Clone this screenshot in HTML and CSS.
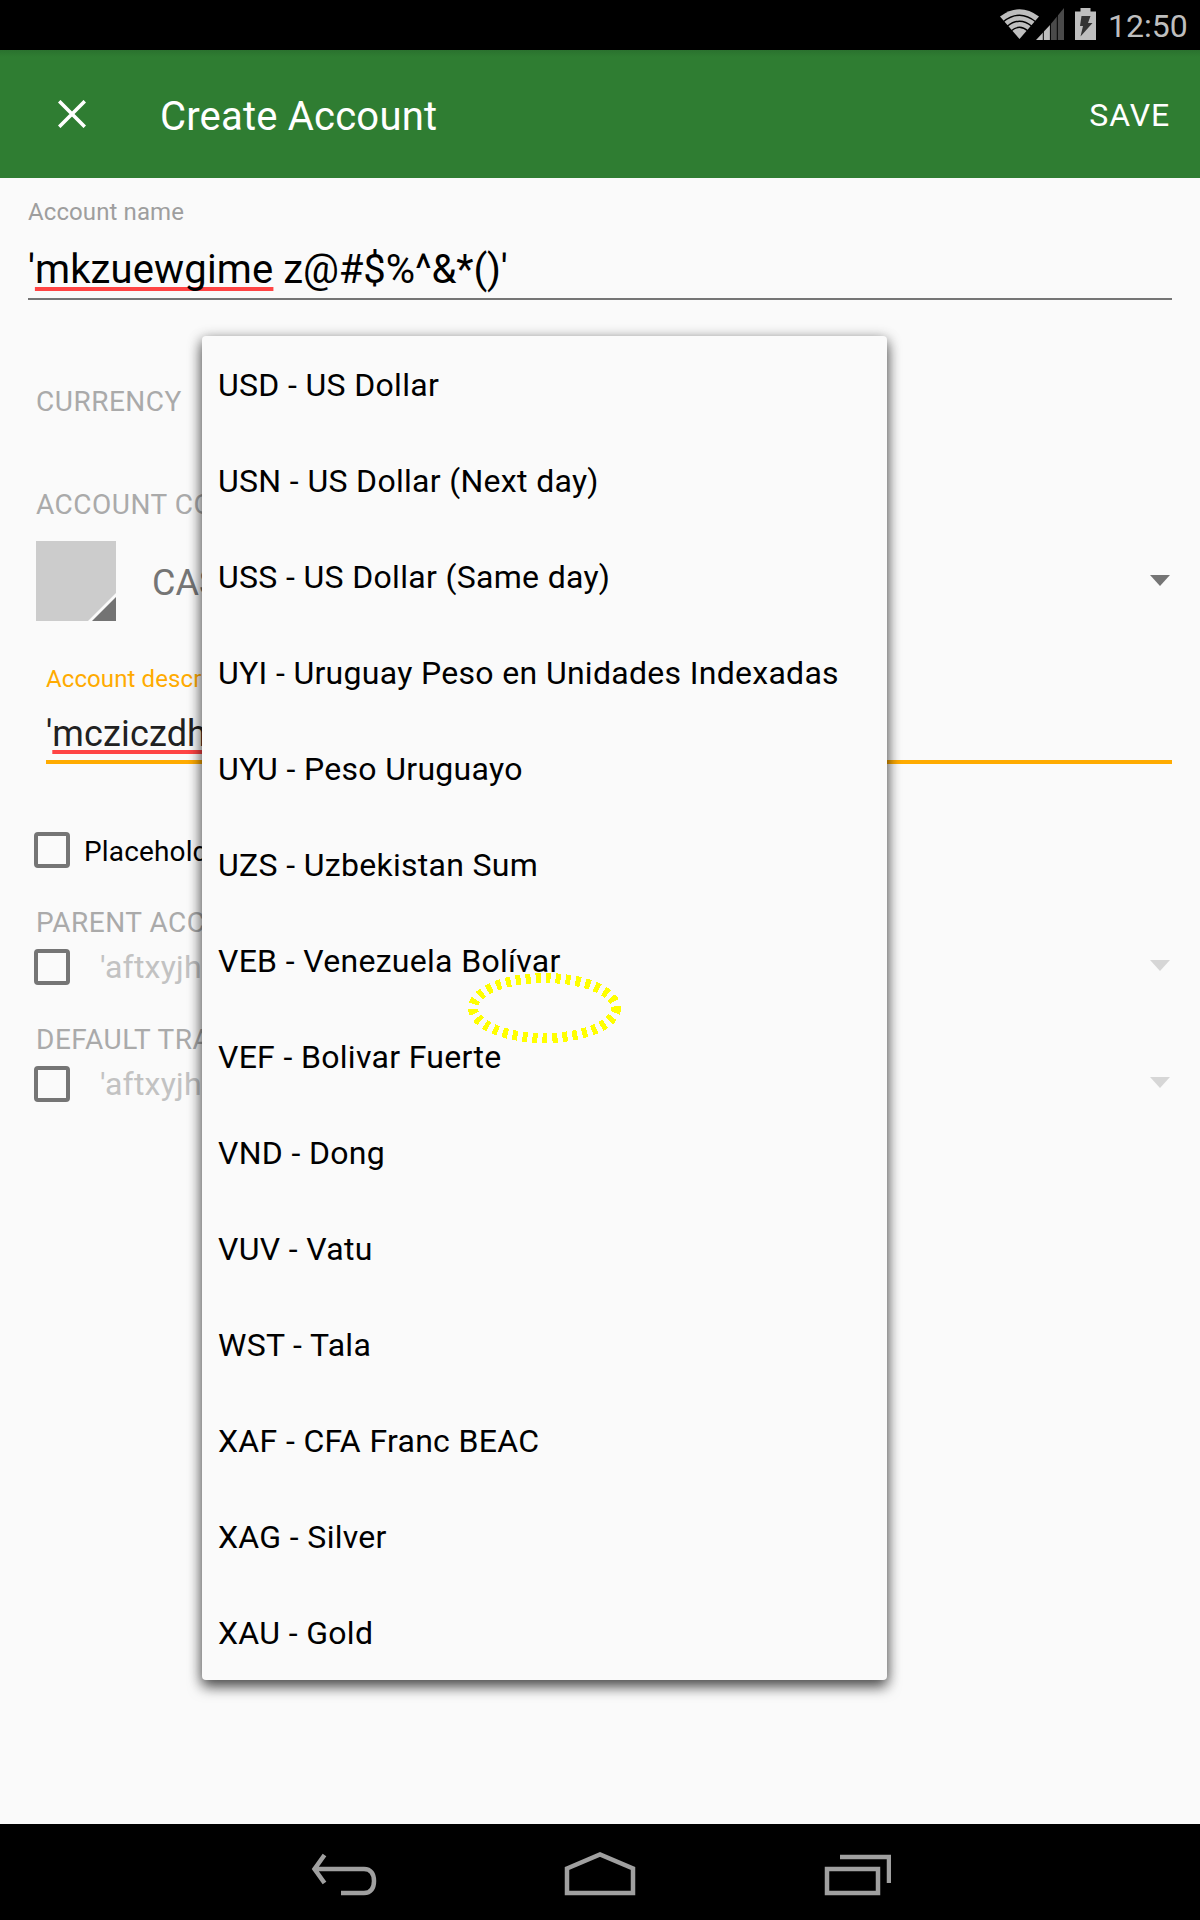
FILE: index.html
```html
<!DOCTYPE html>
<html lang="en">
<head>
<meta charset="utf-8">
<title>Create Account</title>
<link rel="stylesheet" href="styles.css">
</head>
<body>
<div class="screen">
  <div class="status-bar">
    <svg class="status-icons" width="104" height="50" viewBox="0 0 104 50">
      <path d="M4 16.500Q23.500 2 43 16.500L23.500 39Z" fill="#bebebe"/>
      <g fill="none" stroke="#000" stroke-width="1.400">
        <path d="M7 22Q23.500 8.500 40 22M11 26.500Q23.500 16 36 26.500M15 31Q23.500 23.500 32 31"/>
      </g>
      <path d="M40 40L54 25V40Z" fill="#bebebe"/>
      <path d="M54 25L68 8V40H54Z" fill="#4a4a4a"/>
      <path d="M47.300 10V40M54.400 10V40M61.300 10V40" stroke="#000" stroke-width="1"/>
      <path d="M79 11.500H84.500V8H94.500V11.500H100V40H79Z" fill="#bebebe"/>
      <path d="M85.500 16H94.500L92 23H96.500L84.500 36.500L87 26H84Z" fill="#333"/>
    </svg>
    <span class="clock">12:50</span>
  </div>

  <header class="app-bar">
    <svg class="close" width="28" height="28" viewBox="0 0 28 28"><path d="M1.200 1.200L26.800 26.800M26.800 1.200L1.200 26.800" stroke="#fff" stroke-width="3.600"/></svg>
    <h1 class="title">Create Account</h1>
    <span class="save">SAVE</span>
  </header>

  <main class="form">
    <div class="hint">Account name</div>
    <div class="field name">'<span class="typo">mkzuewgime</span> z@#$%^&amp;*()'</div>

    <div class="section currency">CURRENCY</div>
    <div class="section color-label">ACCOUNT COLOR</div>
    <div class="color-row">
      <svg width="80" height="80" viewBox="0 0 80 80"><path d="M0 0H80V80H0Z" fill="#ccc"/><path d="M52 80L80 52V80Z" fill="#fafafa"/><path d="M56 80L80 56V80Z" fill="#737373"/></svg>
      <span class="type">CASH</span>
      <svg class="arrow" width="20" height="11" viewBox="0 0 20 11"><path d="M0 0H20L10 11Z"/></svg>
    </div>

    <div class="description">
      <div class="hint accent">Account description</div>
      <div class="field active">'<span class="typo">mcziczdh</span></div>
    </div>

    <div class="check-row placeholder"><span class="box"></span><span class="check-text">Placeholder account</span></div>

    <div class="section gap">PARENT ACCOUNT</div>
    <div class="check-row disabled"><span class="box"></span><span class="account">'aftxyjh</span><svg class="arrow" width="20" height="11" viewBox="0 0 20 11"><path d="M0 0H20L10 11Z"/></svg></div>

    <div class="section gap">DEFAULT TRANSFER ACCOUNT</div>
    <div class="check-row disabled"><span class="box"></span><span class="account">'aftxyjh</span><svg class="arrow" width="20" height="11" viewBox="0 0 20 11"><path d="M0 0H20L10 11Z"/></svg></div>
  </main>

  <ul class="menu">
    <li>USD - US Dollar</li>
    <li>USN - US Dollar (Next day)</li>
    <li>USS - US Dollar (Same day)</li>
    <li>UYI - Uruguay Peso en Unidades Indexadas</li>
    <li>UYU - Peso Uruguayo</li>
    <li>UZS - Uzbekistan Sum</li>
    <li>VEB - Venezuela Bolívar</li>
    <li>VEF - Bolivar Fuerte</li>
    <li>VND - Dong</li>
    <li>VUV - Vatu</li>
    <li>WST - Tala</li>
    <li>XAF - CFA Franc BEAC</li>
    <li>XAG - Silver</li>
    <li>XAU - Gold</li>
  </ul>

  <svg class="touch" width="154" height="70" viewBox="0 0 154 70" shape-rendering="crispEdges"><ellipse cx="77.500" cy="35" rx="71.500" ry="30" fill="none" stroke="#ff0" stroke-width="10" stroke-dasharray="5 5"/></svg>

  <nav class="nav-bar">
    <svg width="66" height="48" viewBox="0 0 66 48" fill="none" stroke="#a0a0a0" stroke-width="4.500"><path d="M13.500 3L3.500 17L13.500 31M4 17H53C60 17 63 22 63 29S60 41 53 41H30"/></svg>
    <svg width="72" height="48" viewBox="0 0 72 48" fill="none" stroke="#a0a0a0" stroke-width="4.500"><path d="M3 16.500L36 2.500L69 16.500V41H3Z"/></svg>
    <svg width="68" height="48" viewBox="0 0 68 48" fill="none" stroke="#a0a0a0" stroke-width="4.500"><path d="M4 17H55V41H4ZM17 5H66V31"/></svg>
  </nav>
</div>
</body>
</html>
```
FILE: styles.css
```css
* { box-sizing: border-box; }
body { margin: 0; }
.screen {
  position: relative;
  display: flex;
  flex-direction: column;
  width: 1200px;
  height: 1920px;
  overflow: hidden;
  background: #fafafa;
  color: #000;
  font-family: Roboto, sans-serif;
  white-space: nowrap;
}
.status-bar {
  display: flex;
  justify-content: flex-end;
  height: 50px;
  padding-right: 13px;
  background: #000;
  color: #bebebe;
}
.status-icons { margin-right: 8px; }
.clock { width: 79px; font-size: 32px; line-height: 52px; }
.app-bar {
  display: flex;
  align-items: center;
  height: 128px;
  padding: 0 30px 0 58px;
  background: linear-gradient(#2a722e, #2f7d32 7px);
  color: #fff;
}
.close { margin-right: 74px; }
.title { flex: 1; margin: 5px 0 0; font-size: 40px; font-weight: 400; letter-spacing: .2px; }
.save { padding-top: 1px; font-size: 32px; letter-spacing: .9px; }
.form { flex: 1; padding: 10px 28px 0; }
.hint { height: 48px; color: #9e9e9e; font-size: 24px; line-height: 48px; letter-spacing: .1px; }
.hint.accent { color: #ffab00; }
.field {
  height: 64px;
  padding-top: 5px;
  border-bottom: 2px solid #757575;
  font-size: 40px;
  line-height: 57px;
}
.field.active {
  height: 61px;
  padding-top: 5px;
  border-bottom: 4px solid #ffab00;
  color: #212121;
  font-size: 36px;
  line-height: 53px;
}
.name { letter-spacing: -.1px; }
.typo {
  letter-spacing: .15px;
  text-decoration: underline 4px #ff4444;
  text-underline-offset: 4px;
  text-decoration-skip-ink: none;
}
.section {
  height: 40px;
  margin-left: 8px;
  color: #aaa;
  font-size: 28px;
  line-height: 40px;
  letter-spacing: .5px;
}
.currency { margin-top: 82px; }
.color-label { margin-top: 63px; }
.gap { margin-top: 34px; line-height: 42px; }
.color-row { display: flex; align-items: center; margin: 16px 2px 0 8px; }
.type { flex: 1; margin-left: 36px; padding-top: 3px; color: #757575; font-size: 36px; }
.arrow { margin-bottom: 2px; fill: #757575; }
.description { margin: 34px 0 0 18px; }
.check-row { display: flex; align-items: center; height: 36px; margin: 7px 2px 0 6px; }
.placeholder { margin-top: 68px; }
.box { width: 36px; height: 36px; border: 4px solid #757575; border-radius: 4px; }
.check-text { margin-left: 14px; padding-top: 3px; font-size: 28px; letter-spacing: .15px; }
.account { flex: 1; margin-left: 30px; color: #c2c2c2; font-size: 32px; letter-spacing: .2px; }
.disabled .arrow { margin-bottom: 4px; fill: #d6d6d6; }
.menu {
  position: absolute;
  top: 336px;
  left: 202px;
  width: 685px;
  margin: 0;
  padding: 0;
  border-radius: 4px;
  background: #fafafa;
  box-shadow: 0 7px 14px rgba(0, 0, 0, .6), 0 2px 14px rgba(0, 0, 0, .3);
  list-style: none;
}
.menu li {
  height: 96px;
  padding-left: 16px;
  font-size: 32px;
  line-height: 98px;
  letter-spacing: .28px;
  word-spacing: .2px;
}
.touch { position: absolute; top: 973px; left: 467px; }
.nav-bar {
  display: flex;
  justify-content: space-between;
  height: 96px;
  padding: 28px 309px 0 311px;
  background: #000;
}
```
